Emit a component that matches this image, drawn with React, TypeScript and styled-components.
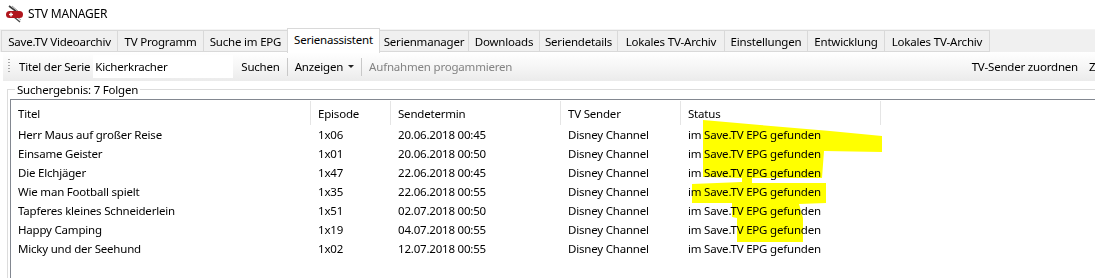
import React from 'react'
import styled, { createGlobalStyle } from 'styled-components'

const GlobalStyle = createGlobalStyle`
  html, body {
    margin: 0;
    padding: 0;
    background: #ffffff;
    overflow: hidden;
  }
  body {
    font-family: 'Noto Sans', 'Liberation Sans', sans-serif;
    font-size: 11.5px;
    letter-spacing: -0.2px;
    color: #000000;
  }
`

const tabs = [
  { label: 'Save.TV Videoarchiv', width: 117 },
  { label: 'TV Programm', width: 87 },
  { label: 'Suche im EPG', width: 85 },
  { label: 'Serienassistent', width: 93, active: true },
  { label: 'Serienmanager', width: 90 },
  { label: 'Downloads', width: 72 },
  { label: 'Seriendetails', width: 79 },
  { label: 'Lokales TV-Archiv', width: 108 },
  { label: 'Einstellungen', width: 84 },
  { label: 'Entwicklung', width: 78 },
  { label: 'Lokales TV-Archiv', width: 106 },
]

const columns = [
  { label: 'Titel', width: 300 },
  { label: 'Episode', width: 80 },
  { label: 'Sendetermin', width: 170 },
  { label: 'TV Sender', width: 120 },
  { label: 'Status', width: 200 },
]

const rows = [
  ['Herr Maus auf großer Reise', '1x06', '20.06.2018 00:45'],
  ['Einsame Geister', '1x01', '20.06.2018 00:50'],
  ['Die Elchjäger', '1x47', '22.06.2018 00:45'],
  ['Wie man Football spielt', '1x35', '22.06.2018 00:55'],
  ['Tapferes kleines Schneiderlein', '1x51', '02.07.2018 00:50'],
  ['Happy Camping', '1x19', '04.07.2018 00:55'],
  ['Micky und der Seehund', '1x02', '12.07.2018 00:55'],
]

// freehand marker stroke, page coordinates
const marker =
  '703,120 760,125 830,131 882,136 882,152 824,151 822,178 752,178 752,183 826,183 826,203 799,204 803,218 803,242 737,242 737,218 732,217 732,203 692,203 692,184 742,182 742,178 703,177'

export default function App() {
  return (
    <Page>
      <GlobalStyle />
      <TitleBar>
        <KnifeIcon />
        <span>STV MANAGER</span>
      </TitleBar>

      <TabStrip>
        {tabs.map((t, i) => (
          <Tab key={i} $active={!!t.active} style={{ width: t.width }}>
            {t.label}
          </Tab>
        ))}
      </TabStrip>

      <ToolBar>
        <Grip />
        <ToolLabel>Titel der Serie</ToolLabel>
        <SearchBox>Kicherkracher</SearchBox>
        <ToolButton>Suchen</ToolButton>
        <Separator />
        <ToolButton>
          Anzeigen <Caret />
        </ToolButton>
        <Separator />
        <ToolButton $disabled>Aufnahmen progammieren</ToolButton>
        <Spacer />
        <ToolButton>TV-Sender zuordnen</ToolButton>
        <EdgeButton>Z</EdgeButton>
      </ToolBar>

      <GroupBox>
        <Legend>Suchergebnis: 7 Folgen</Legend>
        <ListView>
          <HeaderRow>
            {columns.map((c) => (
              <HeaderCell key={c.label}>{c.label}</HeaderCell>
            ))}
          </HeaderRow>
          {rows.map((r) => (
            <Row key={r[0]}>
              <Cell>{r[0]}</Cell>
              <Cell>{r[1]}</Cell>
              <Cell>{r[2]}</Cell>
              <Cell>Disney Channel</Cell>
              <Cell>im Save.TV EPG gefunden</Cell>
            </Row>
          ))}
        </ListView>
      </GroupBox>

      <Marker width="1095" height="278" viewBox="0 0 1095 278">
        <polygon points={marker} fill="#ffff00" />
      </Marker>
    </Page>
  )
}

const KnifeIcon = () => (
  <svg width="20" height="20" viewBox="0 0 20 20">
    <line x1="4" y1="2" x2="12" y2="8" stroke="#3a3a3a" strokeWidth="1.6" />
    <line x1="7" y1="2" x2="13" y2="7" stroke="#9a9a9a" strokeWidth="1" />
    <line x1="9" y1="13" x2="15" y2="18" stroke="#4a4a4a" strokeWidth="1.4" />
    <line x1="12" y1="13" x2="16" y2="16" stroke="#a0a0a0" strokeWidth="1" />
    <rect x="1" y="7" width="17" height="7" rx="3.5" fill="#b0161d" />
    <rect x="4" y="9.8" width="4" height="1.4" fill="#ffffff" />
    <rect x="5.3" y="8.5" width="1.4" height="4" fill="#ffffff" />
  </svg>
)

const Page = styled.div`
  position: relative;
  width: 1095px;
  height: 278px;
  overflow: hidden;
`

const TitleBar = styled.div`
  height: 29px;
  display: flex;
  align-items: center;
  gap: 3px;
  padding-left: 5px;
  padding-bottom: 2px;
  box-sizing: border-box;
  font-size: 12px;
`

const TabStrip = styled.div`
  height: 23px;
  display: flex;
  align-items: flex-end;
  padding-left: 2px;
  background: #f0f0f0;
  border-top: 1px solid #f4f4f4;
  box-sizing: border-box;
`

const Tab = styled.div<{ $active: boolean }>`
  box-sizing: border-box;
  flex: none;
  height: ${(p) => (p.$active ? '25px' : '22px')};
  margin-bottom: ${(p) => (p.$active ? '-1px' : '0')};
  display: flex;
  align-items: center;
  justify-content: center;
  white-space: nowrap;
  background: ${(p) => (p.$active ? '#ffffff' : '#f0f0f0')};
  border: 1px solid #d9d9d9;
  border-bottom: ${(p) => (p.$active ? 'none' : '1px solid #d9d9d9')};
  margin-left: -1px;
  padding-bottom: ${(p) => (p.$active ? '3px' : '0')};
  position: relative;
  z-index: ${(p) => (p.$active ? 1 : 0)};
`

const ToolBar = styled.div`
  height: 29px;
  margin: 0 0 0 3px;
  display: flex;
  align-items: center;
  background: linear-gradient(#ffffff, #f6f6f6 50%, #ebebeb);
  white-space: nowrap;
`

const Grip = styled.div`
  width: 2px;
  height: 15px;
  margin: 0 6px 0 5px;
  background-image: linear-gradient(#a8a8a8 50%, transparent 50%);
  background-size: 2px 3px;
`

const ToolLabel = styled.span`
  padding: 0 3px;
`

const SearchBox = styled.div`
  width: 140px;
  height: 23px;
  background: #ffffff;
  display: flex;
  align-items: center;
  padding-left: 2px;
  box-sizing: border-box;
  margin-right: 3px;
`

const ToolButton = styled.span<{ $disabled?: boolean }>`
  padding: 0 5px;
  color: ${(p) => (p.$disabled ? '#838383' : '#000000')};
  display: flex;
  align-items: center;
  gap: 5px;
`

const EdgeButton = styled.span`
  padding: 0 0 0 6px;
  width: 6px;
`

const Caret = styled.span`
  width: 0;
  height: 0;
  border-left: 3px solid transparent;
  border-right: 3px solid transparent;
  border-top: 3px solid #222222;
`

const Separator = styled.div`
  width: 1px;
  height: 18px;
  background: #c8c8c8;
  margin: 0 2px;
`

const Spacer = styled.div`
  flex: 1;
`

const GroupBox = styled.fieldset`
  margin: 1px 0 0 7px;
  padding: 2px 0 0 2px;
  border: 1px solid #dcdcdc;
  border-right: none;
  min-width: 0;
  height: 210px;
`

const Legend = styled.legend`
  padding: 0 2px;
  margin-left: 5px;
  line-height: 15px;
`

const ListView = styled.div`
  border-top: 1px solid #828790;
  border-left: 1px solid #828790;
  height: 190px;
`

const HeaderRow = styled.div`
  display: grid;
  grid-template-columns: ${columns.map((c) => c.width + 'px').join(' ')};
  height: 25px;
`

const HeaderCell = styled.div`
  display: flex;
  align-items: center;
  padding-left: 7px;
  border-right: 1px solid #e5e5e5;
  margin: 1px 0 0;
`

const Row = styled.div`
  display: grid;
  grid-template-columns: ${columns.map((c) => c.width + 'px').join(' ')};
  height: 19px;
  align-items: center;
`

const Cell = styled.div`
  padding-left: 7px;
  white-space: nowrap;
  overflow: hidden;
`

const Marker = styled.svg`
  position: absolute;
  left: 0;
  top: 0;
  pointer-events: none;
  mix-blend-mode: multiply;
`
